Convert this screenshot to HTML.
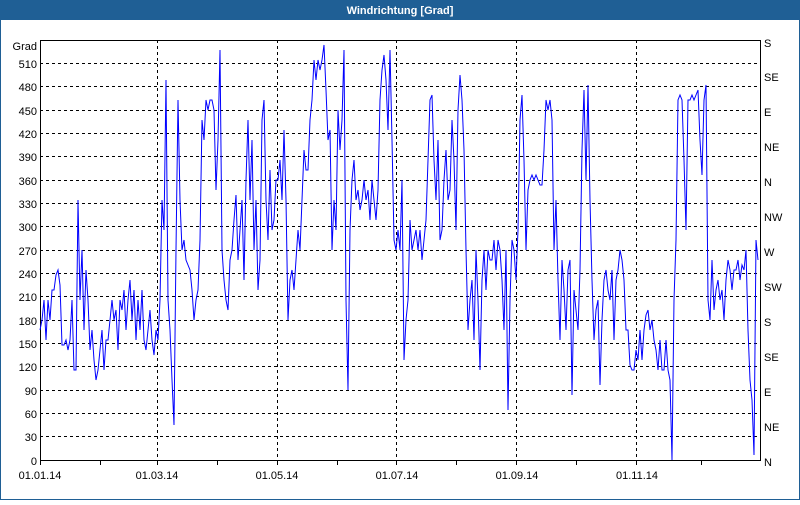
<!DOCTYPE html>
<html><head><meta charset="utf-8"><style>
body{margin:0;width:800px;height:500px;overflow:hidden;background:#fff;font-family:"Liberation Sans",sans-serif}
</style></head><body>
<svg width="800" height="500" xmlns="http://www.w3.org/2000/svg" font-family="Liberation Sans, sans-serif" font-size="11">
<rect x="0" y="0" width="800" height="500" fill="#fff"/>
<rect x="0.5" y="0.5" width="799" height="499" fill="none" stroke="#1f5f95"/>
<rect x="0" y="0" width="800" height="20" fill="#1f5f95"/>
<text x="400" y="14" fill="#fff" font-weight="bold" text-anchor="middle">Windrichtung [Grad]</text>
<g stroke="#000" stroke-dasharray="3,3" stroke-width="1">
<line x1="40" x2="760" y1="63.5" y2="63.5"/><line x1="40" x2="760" y1="86.5" y2="86.5"/><line x1="40" x2="760" y1="110.5" y2="110.5"/><line x1="40" x2="760" y1="133.5" y2="133.5"/><line x1="40" x2="760" y1="156.5" y2="156.5"/><line x1="40" x2="760" y1="180.5" y2="180.5"/><line x1="40" x2="760" y1="203.5" y2="203.5"/><line x1="40" x2="760" y1="226.5" y2="226.5"/><line x1="40" x2="760" y1="250.5" y2="250.5"/><line x1="40" x2="760" y1="273.5" y2="273.5"/><line x1="40" x2="760" y1="296.5" y2="296.5"/><line x1="40" x2="760" y1="320.5" y2="320.5"/><line x1="40" x2="760" y1="343.5" y2="343.5"/><line x1="40" x2="760" y1="366.5" y2="366.5"/><line x1="40" x2="760" y1="390.5" y2="390.5"/><line x1="40" x2="760" y1="413.5" y2="413.5"/><line x1="40" x2="760" y1="436.5" y2="436.5"/>
<line x1="157.5" x2="157.5" y1="40" y2="460"/><line x1="277.5" x2="277.5" y1="40" y2="460"/><line x1="396.5" x2="396.5" y1="40" y2="460"/><line x1="516.5" x2="516.5" y1="40" y2="460"/><line x1="636.5" x2="636.5" y1="40" y2="460"/>
</g>
<rect x="40.5" y="40.5" width="720" height="420" fill="none" stroke="#000"/>
<g stroke="#000"><line x1="100.5" x2="100.5" y1="460" y2="465"/><line x1="217.5" x2="217.5" y1="460" y2="465"/><line x1="337.5" x2="337.5" y1="460" y2="465"/><line x1="456.5" x2="456.5" y1="460" y2="465"/><line x1="576.5" x2="576.5" y1="460" y2="465"/><line x1="701.5" x2="701.5" y1="460" y2="465"/>
<line x1="157.5" x2="157.5" y1="460" y2="465"/><line x1="277.5" x2="277.5" y1="460" y2="465"/><line x1="396.5" x2="396.5" y1="460" y2="465"/><line x1="516.5" x2="516.5" y1="460" y2="465"/><line x1="636.5" x2="636.5" y1="460" y2="465"/><line x1="40.5" x2="40.5" y1="460" y2="465"/>
</g>
<g fill="#000" text-anchor="end">
<text x="37" y="50">Grad</text><text x="37" y="68">510</text><text x="37" y="91">480</text><text x="37" y="115">450</text><text x="37" y="138">420</text><text x="37" y="161">390</text><text x="37" y="185">360</text><text x="37" y="208">330</text><text x="37" y="231">300</text><text x="37" y="255">270</text><text x="37" y="278">240</text><text x="37" y="301">210</text><text x="37" y="325">180</text><text x="37" y="348">150</text><text x="37" y="371">120</text><text x="37" y="395">90</text><text x="37" y="418">60</text><text x="37" y="441">30</text><text x="37" y="465">0</text>
</g>
<g fill="#000"><text x="764" y="47">S</text><text x="764" y="81">SE</text><text x="764" y="116">E</text><text x="764" y="151">NE</text><text x="764" y="186">N</text><text x="764" y="221">NW</text><text x="764" y="256">W</text><text x="764" y="291">SW</text><text x="764" y="326">S</text><text x="764" y="361">SE</text><text x="764" y="396">E</text><text x="764" y="431">NE</text><text x="764" y="466">N</text></g>
<g fill="#000" text-anchor="middle"><text x="40" y="479">01.01.14</text><text x="157" y="479">01.03.14</text><text x="277" y="479">01.05.14</text><text x="397" y="479">01.07.14</text><text x="517" y="479">01.09.14</text><text x="637" y="479">01.11.14</text></g>
<polyline fill="none" stroke="#0000ff" stroke-width="1" points="40,330 42,320 44,300 46,340 48,300 50,320 52,290 54,290 56,275 58,270 60,285 62,345 64,345 66,340 68,350 70,340 72,300 74,370 76,370 78,200 80,300 82,250 84,330 86,270 88,300 90,350 92,330 94,360 96,380 98,370 100,350 102,330 104,370 106,340 108,340 110,320 112,300 114,320 116,310 118,350 120,300 122,310 124,290 126,330 128,300 130,280 132,320 134,290 136,340 138,300 140,330 142,290 144,340 146,350 148,330 150,310 152,340 154,355 156,330 158,340 160,300 162,200 164,230 166,80 168,300 170,330 172,380 174,425 176,250 178,100 180,200 182,250 184,240 186,260 188,265 190,270 192,290 194,320 196,300 198,290 200,240 202,120 204,140 206,100 208,110 210,100 212,100 214,110 216,190 218,140 220,50 222,250 224,280 226,300 228,310 230,260 232,250 234,220 236,195 238,260 240,230 242,200 244,280 246,180 248,120 250,200 252,140 254,250 256,200 258,290 260,260 262,120 264,100 266,200 268,240 270,170 272,230 274,220 276,180 278,180 280,160 282,200 284,130 286,200 288,320 290,280 292,270 294,290 296,260 298,230 300,250 302,200 304,150 306,170 308,170 310,120 312,100 314,60 316,80 318,60 320,70 322,60 324,45 326,90 328,140 330,130 332,250 334,200 336,230 338,110 340,150 342,120 344,50 346,300 348,390 350,230 352,180 354,160 356,200 358,190 360,210 362,200 364,180 366,200 368,190 370,220 372,180 374,200 376,220 378,190 380,100 382,70 384,55 386,80 388,130 390,50 392,140 394,240 396,250 398,230 400,250 402,180 404,360 406,320 408,300 410,220 412,250 414,240 416,230 418,250 420,230 422,260 424,240 426,220 428,160 430,100 432,95 434,160 436,200 438,140 440,240 442,230 444,180 446,150 448,200 450,190 452,120 454,160 456,230 458,110 460,75 462,100 464,150 466,250 468,330 470,300 472,280 474,340 476,250 478,300 480,370 482,280 484,250 486,290 488,250 490,260 492,260 494,240 496,270 498,240 500,250 502,280 504,330 506,250 508,410 510,300 512,240 514,250 516,280 518,230 520,120 522,95 524,160 526,250 528,190 530,180 532,175 534,180 536,175 538,180 540,185 542,185 544,150 546,100 548,110 550,100 552,120 554,250 556,200 558,280 560,340 562,260 564,290 566,330 568,270 570,260 572,395 574,290 576,310 578,330 580,270 582,150 584,90 586,180 588,85 590,200 592,280 594,340 596,310 598,300 600,385 602,320 604,280 606,270 608,290 610,300 612,270 614,340 616,280 618,270 620,250 622,260 624,280 626,330 628,330 630,365 632,370 634,370 636,350 638,360 640,330 642,360 644,330 646,315 648,310 650,330 652,320 654,340 656,350 658,370 660,340 662,370 664,370 666,340 668,370 670,380 672,460 674,300 676,240 678,100 680,95 682,100 684,160 686,230 688,100 690,100 692,95 694,100 696,95 698,90 700,140 702,175 704,100 706,85 708,300 710,320 712,260 714,310 716,290 718,280 720,300 722,290 724,320 726,280 728,260 730,270 732,290 734,270 736,270 738,260 740,280 742,265 744,270 746,250 748,330 750,380 752,400 754,455 756,240 758,260"/>
</svg>
</body></html>
